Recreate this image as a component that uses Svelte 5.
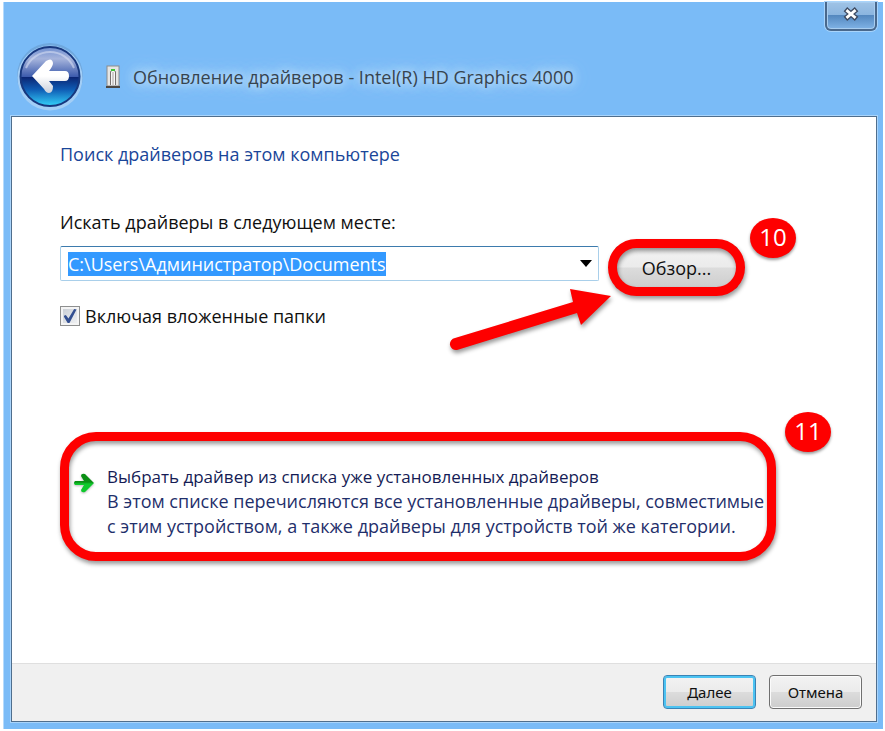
<script lang="ts">
  import { onMount } from "svelte";

  let path = $state("C:\\Users\\Администратор\\Documents");
  let includeSubfolders = $state(true);
  let pathInput: HTMLInputElement;

  onMount(() => {
    pathInput.focus();
    pathInput.select();
  });
</script>

<main class="window">
  <header class="titlebar">
    <button class="back" type="button" aria-label="Назад">
      <svg viewBox="0 0 68 68" width="68" height="68" aria-hidden="true">
        <defs>
          <linearGradient id="orb" x1="0" y1="0" x2="0" y2="1">
            <stop offset="0" stop-color="#6f8fd0" />
            <stop offset="0.2" stop-color="#a6b4dc" />
            <stop offset="0.5" stop-color="#3d5cad" />
            <stop offset="0.51" stop-color="#0b2573" />
            <stop offset="0.72" stop-color="#0f5cb4" />
            <stop offset="1" stop-color="#35d2fa" />
          </linearGradient>
          <linearGradient id="arrow" x1="0" y1="0" x2="0" y2="1">
            <stop offset="0.5" stop-color="#ffffff" />
            <stop offset="1" stop-color="#c9cfdb" />
          </linearGradient>
        </defs>
        <circle cx="34" cy="33" r="33" fill="#6b9fd3" opacity="0.7" />
        <circle cx="34" cy="35" r="32.5" fill="#a3cef6" />
        <circle cx="34" cy="33.500" r="29.5" fill="url(#orb)" stroke="#17387f" stroke-width="2" />
        <path d="M10 25 A26 26 0 0 1 58 25" fill="none" stroke="#d3dcf2" stroke-width="2" opacity="0.6" />
        <path
          d="M16 33 L30 18 Q36 14 37 20 Q37 23 33 28 H49 Q53 28 53 33 Q53 38 49 38 H33 L37 43 Q37 50 33 50 Q30 50 28 46 Z"
          fill="url(#arrow)"
        />
      </svg>
    </button>
    <svg class="device" viewBox="0 0 16 24" width="16" height="24" aria-hidden="true">
      <rect x="2" y="1" width="12" height="20" fill="#e6e6e4" stroke="#8c8c8c" />
      <path d="M5.5 20 V6.5 Q8 3.500 10.500 6.500 V20" fill="#f7f7f7" stroke="#77716d" />
      <path d="M8 7 V20" stroke="#a8a29e" />
      <rect x="6" y="4" width="4" height="2" fill="#3fc43c" />
      <rect x="1" y="21" width="14" height="2" fill="#4c4743" />
    </svg>
    <h1>Обновление драйверов - Intel(R) HD Graphics 4000</h1>
    <button class="close" type="button" aria-label="Закрыть">
      <svg viewBox="0 0 16 14" width="16" height="14" aria-hidden="true">
        <path d="M4.500 4 L11.500 10 M11.500 4 L4.500 10" stroke="#3f4c63" stroke-width="5.500" stroke-linecap="square" />
        <path d="M4.500 4 L11.500 10 M11.500 4 L4.500 10" stroke="#ffffff" stroke-width="2.800" stroke-linecap="square" />
      </svg>
    </button>
  </header>

  <section class="client">
    <div class="content">
      <h2>Поиск драйверов на этом компьютере</h2>

      <label class="caption" for="path">Искать драйверы в следующем месте:</label>
      <div class="location">
        <div class="combo">
          <input id="path" type="text" spellcheck="false" bind:value={path} bind:this={pathInput} />
          <button class="drop" type="button" aria-label="Показать список">
            <svg viewBox="0 0 12 7" width="12" height="7" aria-hidden="true">
              <path d="M0 0 H12 L6 7 Z" fill="#000" />
            </svg>
          </button>
        </div>
        <div class="browse">
          <button class="push" type="button">Обзор...</button>
          <span class="ring"></span>
          <span class="badge step-browse">10</span>
          <svg class="pointer" viewBox="0 0 176 76" width="176" height="76" aria-hidden="true">
            <path
              d="M12 55 L130 19 L127 6 L168 13 L138 42 L134 30 L14 67 A6 6 0 0 1 12 55 Z"
              fill="#fe0000"
            />
          </svg>
        </div>
      </div>

      <label class="check">
        <input type="checkbox" bind:checked={includeSubfolders} />
        <span>Включая вложенные папки</span>
      </label>

      <div class="choice">
        <button class="command" type="button">
          <svg viewBox="0 0 22 22" width="22" height="22" aria-hidden="true">
            <defs>
              <linearGradient id="go" x1="0" y1="0" x2="0" y2="1">
                <stop offset="0.45" stop-color="#0a8f14" />
                <stop offset="0.55" stop-color="#0fc92c" />
              </linearGradient>
            </defs>
            <path
              d="M2 9 H11 L8 4 Q8 1 12 2 L21 11 L12 20 Q8 21 8 18 L11 13 H2 Q0 11 2 9 Z"
              fill="url(#go)"
            />
          </svg>
          <span class="command-text">
            <span class="command-title">Выбрать драйвер из списка уже установленных драйверов</span>
            <span>В этом списке перечисляются все установленные драйверы, совместимые</span>
            <span>с этим устройством, а также драйверы для устройств той же категории.</span>
          </span>
        </button>
        <span class="ring wide"></span>
        <span class="badge step-choice">11</span>
      </div>
    </div>

    <footer>
      <button class="push default" type="button">Далее</button>
      <button class="push" type="button">Отмена</button>
    </footer>
  </section>
</main>

<style>
  :global(body) {
    margin: 0;
    background: #fff;
  }

  :global(#app) {
    min-height: 100vh;
    display: grid;
  }

  .window {
    box-sizing: border-box;
    display: flex;
    flex-direction: column;
    margin: 2px 2px 2px 3px;
    padding: 0 6px 7px 7px;
    border-left: 1px solid #b5dafc;
    background: #7abbf7;
    font-family: "Open Sans", "Noto Sans", sans-serif;
    font-size: 18px;
    line-height: 24px;
    color: #101010;
  }

  button,
  input {
    font: inherit;
    color: inherit;
  }

  button {
    padding: 0;
    border: 0;
    background: none;
  }

  svg {
    display: block;
  }

  .titlebar {
    display: flex;
    align-items: center;
    height: 114px;
    flex: none;
  }

  .back {
    margin: 36px 0 0 5px;
    border-radius: 50%;
  }

  .device {
    margin: 36px 12px 0 21px;
  }

  h1 {
    flex: 1;
    margin: 36px 0 0;
    font-size: 18px;
    font-weight: 400;
    line-height: 24px;
    white-space: nowrap;
    color: #37444f;
    text-shadow: 0 0 8px #d5ebff, 0 0 12px #c4e2ff, 0 0 20px #b4daff;
  }

  .close {
    align-self: flex-start;
    display: grid;
    place-items: center;
    width: 52px;
    height: 29px;
    border: 2px solid #49688c;
    border-top: 0;
    border-radius: 0 0 6px 6px;
    background: linear-gradient(#9fc3e6, #8bb5df 48%, #5488bf 50%, #80b3e6);
    box-shadow: 0 0 0 1px #a9d4fb, inset 0 0 0 1px #a8cdef;
    box-sizing: border-box;
  }

  .close svg {
    margin-bottom: 4px;
  }

  .client {
    flex: 1;
    display: flex;
    flex-direction: column;
    border: 1px solid #4f6e8d;
    box-shadow: 0 0 0 1px #a9d4fb;
    background: #fff;
  }

  .content {
    flex: 1;
    padding: 25px 100px 0 48px;
  }

  h2 {
    margin: 0 0 44px;
    font-size: 18px;
    font-weight: 400;
    line-height: 24px;
    color: #1a4699;
  }

  .caption {
    display: block;
    margin-bottom: 12px;
  }

  .location {
    display: flex;
    align-items: flex-start;
    gap: 16px;
    margin-bottom: 15px;
  }

  .combo {
    flex: 1;
    display: flex;
    align-items: center;
    box-sizing: border-box;
    height: 35px;
    border: 1px solid #a9cfea;
    border-top-color: #3d7bad;
    border-radius: 2px;
  }

  .combo input {
    flex: 1;
    min-width: 0;
    padding: 0 0 0 7px;
    border: 0;
    outline: 0;
    background: none;
  }

  .combo input::selection {
    color: #fff;
    background: #3399ff;
  }

  .drop {
    padding: 8px 6px;
  }

  .browse {
    position: relative;
    width: 123px;
    margin-right: 38px;
  }

  .browse .push {
    display: block;
    width: 100%;
    height: 43px;
    font-family: inherit;
    font-size: 18px;
  }

  .push {
    box-sizing: border-box;
    width: 93px;
    height: 34px;
    border: 1px solid #707070;
    border-radius: 4px;
    background: linear-gradient(#f3f3f3, #ebebeb 49%, #dcdcdc 51%, #cdcdcd);
    box-shadow: inset 0 0 0 1px #fbfbfb;
    font-family: "Noto Sans", sans-serif;
    font-size: 15px;
  }

  .default {
    border-color: #3a83b5;
    box-shadow: inset 0 0 0 2px #4cc3f2;
  }

  .ring {
    position: absolute;
    inset: -7px;
    border: 9px solid #fe0000;
    border-radius: 36px;
    pointer-events: none;
    filter: drop-shadow(1px 3px 2px #0006);
  }

  .wide {
    inset: 0;
  }

  .badge {
    position: absolute;
    width: 46px;
    height: 40px;
    border-radius: 50%;
    background: #fe0000;
    box-shadow: 0 2px 3px #0006;
    color: #fff;
    font-size: 24px;
    line-height: 38px;
    text-align: center;
  }

  .step-browse {
    left: 135px;
    top: -28px;
  }

  .step-choice {
    right: -55px;
    top: -20px;
  }

  .pointer {
    position: absolute;
    right: 119px;
    top: 37px;
    pointer-events: none;
    filter: drop-shadow(1px 3px 2px #0006);
  }

  .check {
    display: flex;
    align-items: center;
    gap: 5px;
    width: fit-content;
  }

  .check input {
    appearance: none;
    display: grid;
    place-items: center;
    box-sizing: border-box;
    width: 20px;
    height: 20px;
    margin: 0;
    border: 1px solid #8e8f8f;
    background: linear-gradient(135deg, #c6cbd2, #f3f4f6);
    box-shadow: inset 0 0 0 2px #f4f4f4;
  }

  .check input:checked::before {
    content: "";
    width: 13px;
    height: 14px;
    background: #334f91;
    clip-path: polygon(0 50%, 18% 42%, 38% 68%, 82% 0, 100% 4%, 46% 100%, 32% 100%);
  }

  .choice {
    position: relative;
    margin-top: 104px;
  }

  .command {
    display: flex;
    align-items: flex-start;
    gap: 12px;
    width: 100%;
    padding: 32px 0 22px 13px;
    text-align: left;
    line-height: 25px;
    color: #1f2f6b;
  }

  .command > svg {
    flex: none;
    margin-top: 8px;
    filter: drop-shadow(0 1px 1px #0004);
  }

  .command-text {
    display: flex;
    flex-direction: column;
    white-space: nowrap;
  }

  .command-title {
    font-size: 17px;
    color: #151c55;
  }

  footer {
    display: flex;
    justify-content: flex-end;
    gap: 13px;
    padding: 11px 14px 12px;
    border-top: 1px solid #dfdfdf;
    background: #f0f0f0;
  }
</style>
